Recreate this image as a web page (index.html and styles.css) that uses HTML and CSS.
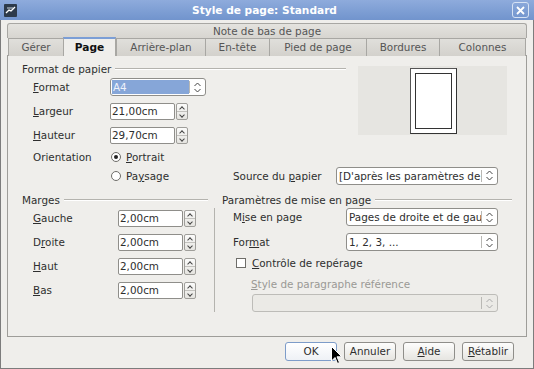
FILE: index.html
```html
<!DOCTYPE html>
<html lang="fr">
<head>
  <meta charset="UTF-8">
  <title>Style de page: Standard</title>
  <link rel="stylesheet" href="styles.css">
</head>
<body>
  <div class="window">
    <div class="titlebar">
      <span class="app-icon">
        <svg width="13" height="13" viewBox="0 0 13 13"><rect width="13" height="13" rx="1" fill="#2d3a4a"/><path d="M2 9 L5 6 L7 7 L11 3" stroke="#fff" stroke-width="1.4" fill="none"/><path d="M3 4 H9" stroke="#cfd8e3" stroke-width="1"/></svg>
      </span>
      <span class="title">Style de page: Standard</span>
      <span class="close-btn">
        <svg width="9" height="9" viewBox="0 0 9 9"><path d="M1 1 L8 8 M8 1 L1 8" stroke="#fff" stroke-width="1.8"/></svg>
      </span>
    </div>

    <div class="body">
      <div class="tab-back">Note de bas de page</div>
      <div class="tab-row">
        <div class="tab">Gérer</div>
        <div class="tab active">Page</div>
        <div class="tab">Arrière-plan</div>
        <div class="tab">En-tête</div>
        <div class="tab">Pied de page</div>
        <div class="tab">Bordures</div>
        <div class="tab">Colonnes</div>
      </div>

      <div class="panel">
        <div class="top">
          <div class="paper">
            <div class="group-title">Format de papier</div>
            <div class="form-rows">
              <div class="row">
                <span class="label"><u>F</u>ormat</span>
                <div class="combo selected">
                  <span class="combo-text">A4</span>
                  <span class="combo-btn"><svg width="7" height="11" viewBox="0 0 7 11"><path d="M0.5 4 L3.5 1 L6.5 4 M0.5 7 L3.5 10 L6.5 7" stroke="#444" fill="none"/></svg></span>
                </div>
              </div>
              <div class="row">
                <span class="label"><u>L</u>argeur</span>
                <div class="spin"><span class="spin-input">21,00cm</span><span class="spin-btn"><span class="up"></span><span class="down"></span></span></div>
              </div>
              <div class="row">
                <span class="label"><u>H</u>auteur</span>
                <div class="spin"><span class="spin-input">29,70cm</span><span class="spin-btn"><span class="up"></span><span class="down"></span></span></div>
              </div>
              <div class="row short">
                <span class="label">Orientation</span>
                <span class="radio-item"><span class="radio checked"></span><span><u>P</u>ortrait</span></span>
              </div>
            </div>
          </div>
          <div class="preview">
            <div class="sheet"><div class="sheet-inner"></div></div>
          </div>
        </div>

        <div class="paysage-row">
          <span class="radio-item wide"><span class="radio"></span><span>Pa<u>y</u>sage</span></span>
          <span class="source-label">Source du <u>p</u>apier</span>
          <div class="combo source">
            <span class="combo-text">[D'après les paramètres de</span>
            <span class="combo-btn"><svg width="7" height="11" viewBox="0 0 7 11"><path d="M0.5 4 L3.5 1 L6.5 4 M0.5 7 L3.5 10 L6.5 7" stroke="#444" fill="none"/></svg></span>
          </div>
        </div>

        <div class="bottom">
          <div class="margins">
            <div class="group-title">Marges</div>
            <div class="margin-rows">
              <div class="row">
                <span class="label"><u>G</u>auche</span>
                <div class="spin"><span class="spin-input">2,00cm</span><span class="spin-btn"><span class="up"></span><span class="down"></span></span></div>
              </div>
              <div class="row">
                <span class="label">D<u>r</u>oite</span>
                <div class="spin"><span class="spin-input">2,00cm</span><span class="spin-btn"><span class="up"></span><span class="down"></span></span></div>
              </div>
              <div class="row">
                <span class="label"><u>H</u>aut</span>
                <div class="spin"><span class="spin-input">2,00cm</span><span class="spin-btn"><span class="up"></span><span class="down"></span></span></div>
              </div>
              <div class="row">
                <span class="label"><u>B</u>as</span>
                <div class="spin"><span class="spin-input">2,00cm</span><span class="spin-btn"><span class="up"></span><span class="down"></span></span></div>
              </div>
            </div>
          </div>

          <div class="layout">
            <div class="group-title">Paramètres de mise en page</div>
            <div class="layout-body">
              <div class="lrow">
                <span class="llabel">M<u>i</u>se en page</span>
                <div class="combo wide">
                  <span class="combo-text">Pages de droite et de gau</span>
                  <span class="combo-btn"><svg width="7" height="11" viewBox="0 0 7 11"><path d="M0.5 4 L3.5 1 L6.5 4 M0.5 7 L3.5 10 L6.5 7" stroke="#444" fill="none"/></svg></span>
                </div>
              </div>
              <div class="lrow">
                <span class="llabel">For<u>m</u>at</span>
                <div class="combo wide">
                  <span class="combo-text">1, 2, 3, ...</span>
                  <span class="combo-btn"><svg width="7" height="11" viewBox="0 0 7 11"><path d="M0.5 4 L3.5 1 L6.5 4 M0.5 7 L3.5 10 L6.5 7" stroke="#444" fill="none"/></svg></span>
                </div>
              </div>
              <div class="check-row">
                <span class="checkbox"></span><span><u>C</u>ontrôle de repérage</span>
              </div>
              <div class="disabled-label"><u>S</u>tyle de paragraphe référence</div>
              <div class="combo disabled">
                <span class="combo-text"></span>
                <span class="combo-btn"><svg width="7" height="11" viewBox="0 0 7 11"><path d="M0.5 4 L3.5 1 L6.5 4 M0.5 7 L3.5 10 L6.5 7" stroke="#aaa" fill="none"/></svg></span>
              </div>
            </div>
          </div>
        </div>
      </div>

      <div class="buttons">
        <div class="btn focus">OK
          <svg class="cursor" width="12" height="19" viewBox="0 0 12 19"><path d="M0.5 0.5 L0.5 15 L4 11.5 L6.5 17.5 L8.5 16.5 L6 10.8 L10.8 10.8 Z" fill="#000" stroke="#fff" stroke-width="1"/></svg>
        </div>
        <div class="btn">Annuler</div>
        <div class="btn"><u>A</u>ide</div>
        <div class="btn"><u>R</u>établir</div>
      </div>
    </div>
  </div>
</body>
</html>
```

FILE: styles.css
```css
body {
  margin: 0;
  font-family: "DejaVu Sans", sans-serif;
  font-size: 10.4px;
  color: #2e2e2e;
  background: #efeeeb;
}

u {
  text-decoration-thickness: 1px;
  text-underline-offset: 1px;
}

.window {
  width: 534px;
  height: 369px;
  display: flex;
  flex-direction: column;
}

.titlebar {
  height: 20px;
  display: flex;
  align-items: center;
  padding: 0 4px;
  background: linear-gradient(#8eabdc, #7194cd);
  color: #fff;
  font-weight: bold;
  font-size: 10.6px;
}

.app-icon {
  width: 13px;
  height: 13px;
  display: flex;
}

.title {
  flex: 1;
  text-align: center;
}

.close-btn {
  width: 15px;
  height: 14px;
  border: 1px solid #d6e2f4;
  border-radius: 3px;
  display: flex;
  align-items: center;
  justify-content: center;
  margin-right: 1px;
}

.body {
  flex: 1;
  border: 1px solid #7c7c7c;
  border-top: none;
  padding: 3px 6px 0 6px;
  background: #efeeeb;
}

.tab-back {
  width: 520px;
  height: 15px;
  box-sizing: border-box;
  border: 1px solid #a8a7a3;
  border-bottom: none;
  border-radius: 3px 3px 0 0;
  background: linear-gradient(#e4e3df, #d7d5d0);
  color: #555;
  text-align: center;
  line-height: 14px;
}

.tab-row {
  display: grid;
  grid-template-columns: 55px 53px 89px 64px 97px 73px 87px;
  margin-left: 1px;
  height: 17px;
  position: relative;
  z-index: 1;
}

.tab {
  box-sizing: border-box;
  border: 1px solid #a8a7a3;
  border-right: none;
  border-bottom: none;
  background: linear-gradient(#e0dfdb, #d3d1cc);
  color: #555;
  text-align: center;
  line-height: 16px;
}

.tab:last-child {
  border-right: 1px solid #a8a7a3;
}

.tab.active {
  margin-top: -1px;
  height: 19px;
  background: #efeeeb;
  border-top: 2px solid #7b9ed6;
  border-right: 1px solid #a8a7a3;
  color: #111;
  font-weight: bold;
  font-size: 10.6px;
}

.panel {
  width: 520px;
  height: 282px;
  box-sizing: border-box;
  border: 1px solid #9e9d99;
  padding: 6px 0 0 14px;
  background: #efeeeb;
}

.group-title {
  display: flex;
  align-items: center;
  height: 13px;
  gap: 4px;
  white-space: nowrap;
}

.group-title::after {
  content: "";
  flex: 1;
  border-top: 1px solid #b4b3ae;
  border-bottom: 1px solid #fff;
}

.top {
  display: flex;
  align-items: flex-start;
}

.paper {
  width: 324px;
}

.form-rows {
  padding-left: 11px;
}

.row {
  display: grid;
  grid-template-columns: 77px auto;
  align-items: center;
  height: 24px;
}

.row.short {
  height: 19px;
}

.preview {
  width: 149px;
  height: 69px;
  margin: 4px 0 0 12px;
  background: #e6e5e1;
  display: flex;
  justify-content: center;
  align-items: center;
}

.sheet {
  width: 47px;
  height: 66px;
  box-sizing: border-box;
  border: 1px solid #555;
  border-right-color: #333;
  border-bottom-color: #333;
  background: #fff;
  padding: 4px;
  margin-left: 1px;
}

.sheet-inner {
  height: 100%;
  border: 1px solid #333;
  box-sizing: border-box;
}

.combo {
  height: 18px;
  box-sizing: border-box;
  border: 1px solid #8f8e8a;
  border-radius: 3px;
  background: #fff;
  display: flex;
  align-items: center;
  overflow: hidden;
  white-space: nowrap;
}

.combo-text {
  flex: 1;
  padding-left: 2px;
  overflow: hidden;
  height: 100%;
  line-height: 16px;
}

.combo-btn {
  width: 15px;
  height: 12px;
  border-left: 1px solid #b9b8b4;
  display: flex;
  justify-content: center;
  align-items: center;
}

.combo.selected {
  width: 96px;
}

.combo.selected .combo-text {
  background: #86a6d8;
  color: #eef2fa;
  margin: 1px 0 1px 1px;
  height: 14px;
  line-height: 14px;
  padding-left: 1px;
}

.combo.source {
  width: 162px;
}

.combo.wide {
  width: 152px;
}

.combo.disabled {
  width: 246px;
  margin-left: 19px;
  margin-top: 3px;
  background: #ebeae6;
  border-color: #bdbcb8;
}

.spin {
  display: flex;
  gap: 1px;
  height: 17px;
}

.spin-input {
  width: 65px;
  box-sizing: border-box;
  border: 1px solid #8f8e8a;
  border-radius: 2px;
  background: #fff;
  padding-left: 1px;
  line-height: 15px;
}

.spin-btn {
  width: 12px;
  box-sizing: border-box;
  border: 1px solid #9f9e9a;
  border-radius: 2px;
  background: linear-gradient(#fbfbfa, #e5e4e0);
  display: flex;
  flex-direction: column;
}

.spin-btn span {
  flex: 1;
  position: relative;
}

.spin-btn .up {
  border-bottom: 1px solid #c2c1bd;
}

.spin-btn span::after {
  content: "";
  position: absolute;
  left: 3px;
  width: 3px;
  height: 3px;
  border-left: 1px solid #444;
  border-top: 1px solid #444;
}

.spin-btn .up::after {
  top: 3px;
  transform: rotate(45deg);
}

.spin-btn .down::after {
  top: 1px;
  transform: rotate(225deg);
}

.radio-item {
  display: flex;
  align-items: center;
  gap: 5px;
}

.radio {
  width: 10px;
  height: 10px;
  box-sizing: border-box;
  border: 1px solid #6e6d69;
  border-radius: 50%;
  background: #fff;
  margin-left: 1px;
  position: relative;
}

.radio.checked::after {
  content: "";
  position: absolute;
  left: 2px;
  top: 2px;
  width: 4px;
  height: 4px;
  border-radius: 50%;
  background: #222;
}

.paysage-row {
  display: flex;
  align-items: center;
  height: 19px;
  padding-left: 88px;
}

.radio-item.wide {
  width: 123px;
}

.source-label {
  width: 103px;
}

.bottom {
  display: grid;
  grid-template-columns: 192px 298px;
  margin-top: 8px;
}

.margins .group-title {
  padding-right: 6px;
}

.margin-rows {
  padding-left: 11px;
}

.margin-rows .row {
  grid-template-columns: 85px auto;
}

.layout .group-title {
  padding-left: 8px;
}

.layout-body {
  margin-top: 2px;
  border-left: 1px solid #b4b3ae;
  padding-left: 18px;
  height: 104px;
}

.lrow {
  display: grid;
  grid-template-columns: 113px auto;
  align-items: center;
  height: 18px;
  margin-bottom: 7px;
}

.check-row {
  display: flex;
  align-items: center;
  gap: 6px;
  height: 16px;
  margin-top: -3px;
}

.checkbox {
  width: 10px;
  height: 10px;
  box-sizing: border-box;
  border: 1px solid #6e6d69;
  background: #fff;
  margin-left: 3px;
}

.disabled-label {
  color: #9a9995;
  padding-left: 18px;
  margin-top: 6px;
  height: 14px;
  line-height: 14px;
}

.buttons {
  display: flex;
  justify-content: flex-end;
  gap: 7px;
  padding-right: 13px;
  margin-top: 5px;
}

.btn {
  width: 52px;
  height: 19px;
  box-sizing: border-box;
  border: 1px solid #8f8e8a;
  border-radius: 3px;
  background: linear-gradient(#fdfdfc, #e6e5e1);
  text-align: center;
  line-height: 17px;
  position: relative;
}

.btn.focus {
  border-color: #7d9cc9;
  background: linear-gradient(#ffffff, #eef1f6);
}

.cursor {
  position: absolute;
  left: 45px;
  top: 3px;
}
```
